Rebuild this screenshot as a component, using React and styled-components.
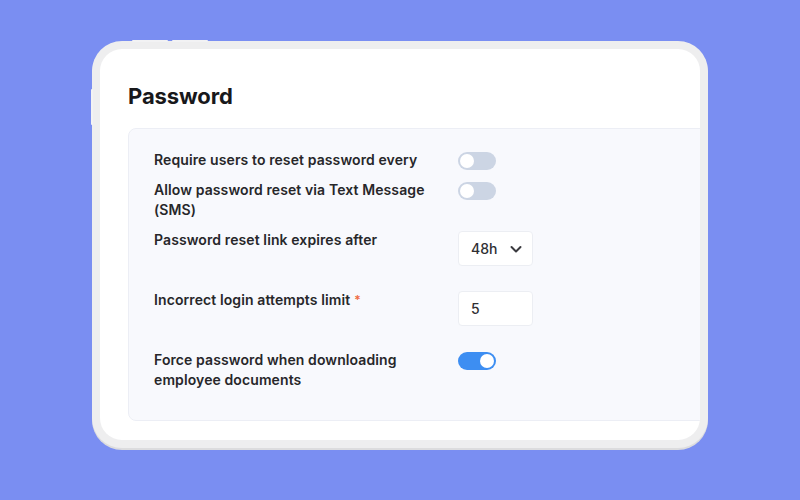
import React, { useState } from 'react'
import styled, { createGlobalStyle } from 'styled-components'

const Global = createGlobalStyle`
  html, body {
    margin: 0;
    padding: 0;
    background: #7a8ef2;
    font-family: 'Inter', 'Noto Sans', sans-serif;
  }
`

const Page = styled.div`
  width: 800px;
  height: 500px;
  padding: 41px 0 0 92px;
  box-sizing: border-box;
  background: #7a8ef2;
`

const Device = styled.div`
  position: relative;
  width: 616px;
  height: 407px;
  box-sizing: border-box;
  padding: 8px;
  border-radius: 30px;
  background: #eeeeef;
  box-shadow: 0 2px 0 #dcdcde;
`

const SideButton = styled.span`
  position: absolute;
  background: #f2f2f4;
  border-radius: 2px;
  ${(p) => p.$top
    ? `top: -1px; left: ${p.$at}px; width: 36px; height: 2px;`
    : `left: -1px; top: ${p.$at}px; width: 2px; height: 36px;`}
`

const Screen = styled.div`
  height: 100%;
  box-sizing: border-box;
  padding: 32px 0 0 28px;
  border-radius: 22px;
  background: #ffffff;
  overflow: hidden;
`

const Title = styled.h1`
  margin: 0 0 17px;
  font-size: 22px;
  line-height: 30px;
  font-weight: 700;
  color: #18181b;
  letter-spacing: -0.1px;
`

const Panel = styled.div`
  margin-right: -24px;
  padding: 21px 25px 30px;
  border: 1px solid #eceef5;
  border-radius: 8px;
  background: #f8f9fd;
  display: flex;
  flex-direction: column;
  gap: 10px;
`

const Row = styled.div`
  display: grid;
  grid-template-columns: 304px auto;
  align-items: start;
  min-height: ${(p) => (p.$tall ? '50px' : 'auto')};
`

const Label = styled.div`
  max-width: 288px;
  font-size: 14px;
  line-height: 20px;
  font-weight: 600;
  letter-spacing: 0.1px;
  color: #27272a;
`

const Required = styled.span`
  margin-left: 4px;
  color: #ef6a42;
  font-size: 12px;
  vertical-align: top;
`

const Track = styled.button`
  margin-top: 2px;
  width: 38px;
  height: 18px;
  padding: 2px;
  border: 0;
  border-radius: 9px;
  background: ${(p) => (p.$on ? '#3d8ef2' : '#ccd5e4')};
  display: flex;
  justify-content: ${(p) => (p.$on ? 'flex-end' : 'flex-start')};
  cursor: pointer;
`

const Knob = styled.span`
  width: 14px;
  height: 14px;
  border-radius: 50%;
  background: #ffffff;
`

const Box = styled.div`
  margin-top: 1px;
  width: 75px;
  height: 35px;
  box-sizing: border-box;
  padding: 0 9px 0 12px;
  border: 1px solid #eceef3;
  border-radius: 4px;
  background: #ffffff;
  display: flex;
  align-items: center;
  justify-content: space-between;
  font-size: 14px;
  font-weight: 500;
  color: #2f2f33;
`

const Toggle = ({ on }) => {
  const [value, setValue] = useState(on)
  return (
    <Track $on={value} onClick={() => setValue(!value)}>
      <Knob />
    </Track>
  )
}

const Chevron = () => (
  <svg width="14" height="14" viewBox="0 0 14 14" fill="none">
    <path d="M2.5 5 7 9.5 11.5 5" stroke="#3a3a3f" strokeWidth="2" strokeLinecap="round" strokeLinejoin="round" />
  </svg>
)

export default function App() {
  return (
    <>
      <Global />
      <Page>
        <Device>
          <SideButton $top $at={40} />
          <SideButton $top $at={80} />
          <SideButton $at={48} />
          <Screen>
            <Title>Password</Title>
            <Panel>
              <Row>
                <Label>Require users to reset password every</Label>
                <Toggle on={false} />
              </Row>
              <Row>
                <Label>Allow password reset via Text Message (SMS)</Label>
                <Toggle on={false} />
              </Row>
              <Row $tall>
                <Label>Password reset link expires after</Label>
                <Box>
                  48h
                  <Chevron />
                </Box>
              </Row>
              <Row $tall>
                <Label>
                  Incorrect login attempts limit<Required>*</Required>
                </Label>
                <Box>5</Box>
              </Row>
              <Row>
                <Label>Force password when downloading employee documents</Label>
                <Toggle on />
              </Row>
            </Panel>
          </Screen>
        </Device>
      </Page>
    </>
  )
}
